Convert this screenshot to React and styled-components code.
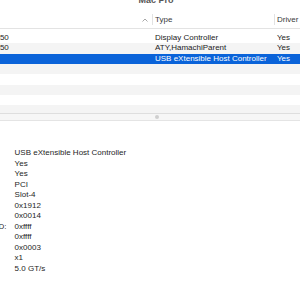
import React from "react";
import styled, { createGlobalStyle, css } from "styled-components";

const rows = [
  { name: "AMD Radeon HD 7950", type: "Display Controller", driver: "Yes" },
  { name: "AMD Radeon HD 7950", type: "ATY,HamachiParent", driver: "Yes" },
  { name: "pci1912,14", type: "USB eXtensible Host Controller", driver: "Yes", selected: true },
  {},
  {},
  {},
  {},
  {},
];

const details = [
  ["Type:", "USB eXtensible Host Controller"],
  ["Driver Installed:", "Yes"],
  ["MSI:", "Yes"],
  ["Bus:", "PCI"],
  ["Slot:", "Slot-4"],
  ["Vendor ID:", "0x1912"],
  ["Device ID:", "0x0014"],
  ["Subsystem Vendor ID:", "0xffff"],
  ["Subsystem ID:", "0xffff"],
  ["Revision ID:", "0x0003"],
  ["Link Width:", "x1"],
  ["Link Speed:", "5.0 GT/s"],
];

const App = () => {
  return (
    <>
      <GlobalStyle />
      <Window>
        <Title>Mac Pro</Title>
        <Header>
          <HeaderCell $right>
            <svg width="6" height="4" viewBox="0 0 6 4">
              <path d="M0.5 3.5 L3 1 L5.5 3.5" fill="none" stroke="#a8a8a8" strokeWidth="1" />
            </svg>
          </HeaderCell>
          <HeaderCell>
            <Divider />
            Type
          </HeaderCell>
          <HeaderCell>
            <Divider />
            Driver
          </HeaderCell>
        </Header>
        <Body>
          {rows.map((r, i) => (
            <Row key={i} $striped={i % 2 === 1} $selected={r.selected}>
              <Cell $first>{r.selected ? "" : r.name}</Cell>
              <Cell>{r.type}</Cell>
              <Cell>{r.driver}</Cell>
            </Row>
          ))}
        </Body>
        <Splitter>
          <Dot />
        </Splitter>
        <Details>
          {details.map(([label, value]) => (
            <React.Fragment key={label}>
              <Label>{label}</Label>
              <Value>{value}</Value>
            </React.Fragment>
          ))}
        </Details>
      </Window>
    </>
  );
};

const GlobalStyle = createGlobalStyle`
  html, body {
    margin: 0;
    padding: 0;
    background: #fff;
    overflow: hidden;
  }
  body {
    font-family: "Liberation Sans", Arial, sans-serif;
    font-size: 8px;
    color: #222;
  }
`;

const Window = styled.div`
  width: 300px;
  height: 300px;
  overflow: hidden;
  background: #fff;
`;

const Title = styled.div`
  height: 10px;
  margin-top: -5px;
  padding-left: 12px;
  line-height: 10px;
  text-align: center;
  font-size: 9px;
  font-weight: bold;
  color: #555;
`;

const Header = styled.div`
  display: grid;
  grid-template-columns: 230px 122px 1fr;
  margin: 5px 0 0 -78px;
  height: 18px;
  border-bottom: 1px solid #e3e3e3;
  color: #3a3a3a;
`;

const HeaderCell = styled.div`
  display: flex;
  align-items: center;
  white-space: nowrap;
  ${(p) =>
    p.$right &&
    css`
      justify-content: flex-end;
      padding-right: 4px;
      padding-top: 1px;
    `}
`;

const Divider = styled.span`
  width: 1px;
  height: 11px;
  background: #e2e2e2;
  margin-right: 2px;
`;

const Body = styled.div`
  height: 84px;
  padding-top: 4px;
  box-sizing: border-box;
  overflow: hidden;
`;

const Row = styled.div`
  display: grid;
  grid-template-columns: 230px 122px 1fr;
  margin-left: -78px;
  height: 10.35px;
  line-height: 10.35px;
  white-space: nowrap;
  background: ${(p) => (p.$selected ? "#0a63d9" : p.$striped ? "#f4f4f4" : "#fff")};
  color: ${(p) => (p.$selected ? "#fff" : "#222")};
`;

const Cell = styled.div`
  padding-left: ${(p) => (p.$first ? "5px" : "3px")};
  overflow: hidden;
`;

const Splitter = styled.div`
  height: 6px;
  border-top: 1px solid #dedede;
  border-bottom: 1px solid #e4e4e4;
  background: #f6f6f6;
  display: flex;
  align-items: center;
`;

const Dot = styled.span`
  width: 4px;
  height: 4px;
  border-radius: 50%;
  background: #cfcfcf;
  margin-left: 155px;
`;

const Details = styled.div`
  display: grid;
  grid-template-columns: max-content 1fr;
  column-gap: 8px;
  margin-left: -73px;
  padding-top: 27px;
  line-height: 10.55px;
  white-space: nowrap;
  color: #1e1e1e;
`;

const Label = styled.div``;

const Value = styled.div``;

export default App;
